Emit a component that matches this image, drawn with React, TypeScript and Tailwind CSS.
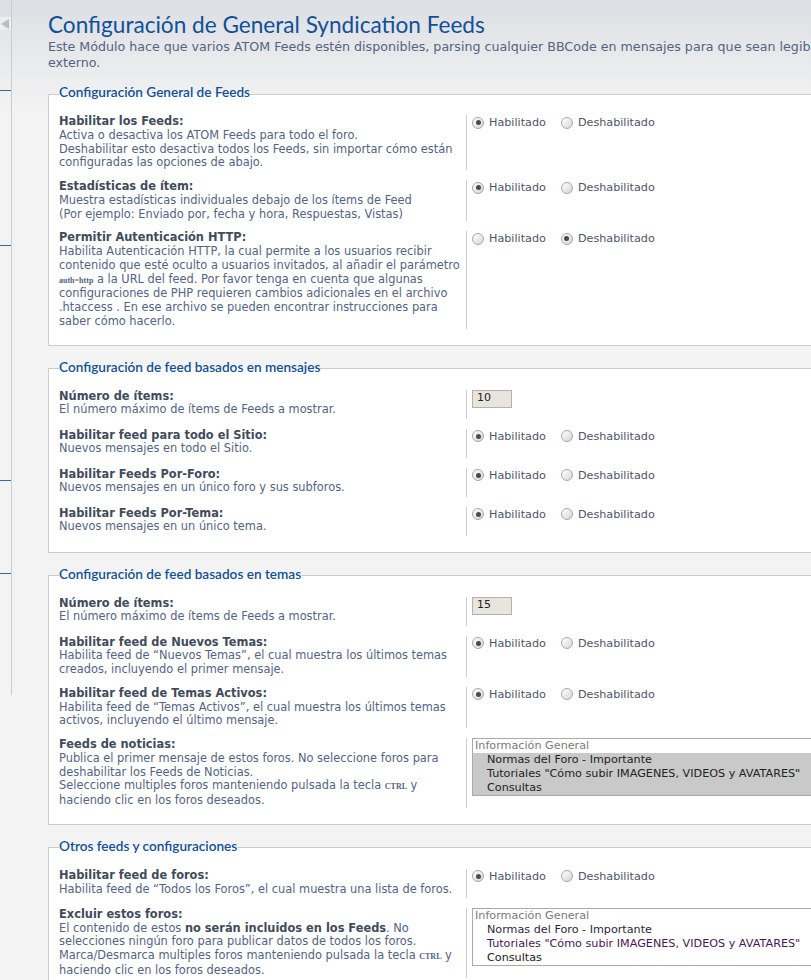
import React from "react";

const body = { fontFamily: '"DejaVu Sans", Verdana, sans-serif' };
const head = { fontFamily: 'Lato, "Trebuchet MS", sans-serif' };

function Radio({ on }: { on: boolean }) {
  return (
    <span className="inline-flex h-[12px] w-[12px] shrink-0 items-center justify-center rounded-full border border-[#a7a7a7] bg-gradient-to-br from-[#ffffff] to-[#d6d6d6]">
      {on ? <span className="h-[5px] w-[5px] rounded-full bg-[#4a4a4a]" /> : null}
    </span>
  );
}

function YesNo({ yes }: { yes: boolean }) {
  return (
    <div className="flex items-center pt-[1px] text-[11.2px] leading-[13px] text-[#4f5468]">
      <Radio on={yes} />
      <span className="ml-[5px]">Habilitado</span>
      <span className="ml-[15px] flex"><Radio on={!yes} /></span>
      <span className="ml-[5px]">Deshabilitado</span>
    </div>
  );
}

function NumInput({ v }: { v: string }) {
  return (
    <div className="flex h-[18px] w-[40px] items-center border border-[#b6b1a8] bg-[#e8e4de] pl-[4px] text-[11px] text-[#222]">
      {v}
    </div>
  );
}

function ForumSelect({ selected }: { selected: boolean }) {
  const opt = selected ? "bg-[#c9c9c9]" : "";
  return (
    <div className="h-[58px] w-[420px] border border-[#a9a9a9] bg-white text-[11.2px] leading-[14px]">
      <div className="pl-[2px] text-[#7a7a7a]">Información General</div>
      <div className={`pl-[14px] ${opt} ${selected ? "text-[#222]" : "text-[#2e1f3a]"}`}>Normas del Foro - Importante</div>
      <div className={`pl-[14px] ${opt} ${selected ? "text-[#222]" : "text-[#4a1656]"}`}>Tutoriales "Cómo subir IMAGENES, VIDEOS y AVATARES"</div>
      <div className={`pl-[14px] ${opt} text-[#222]`}>Consultas</div>
    </div>
  );
}

const Kbd = ({ children }: { children: React.ReactNode }) => (
  <span className="text-[8px] font-bold" style={{ fontFamily: '"Liberation Serif", serif' }}>{children}</span>
);

type Row = { label: string; desc: React.ReactNode[]; ctl: React.ReactNode };

function Field({ r }: { r: Row }) {
  return (
    <div className="mb-[10px] flex">
      <div className="w-[407px] shrink-0 text-[11.4px] leading-[13.75px]">
        <div className="font-bold text-[#414b5c]">{r.label}</div>
        {r.desc.map((d, i) => (
          <div key={i} className="whitespace-nowrap text-[#536482]">{d}</div>
        ))}
      </div>
      <div className="min-h-[29px] flex-1 border-l border-[#cfcfcf] pl-[5px]">{r.ctl}</div>
    </div>
  );
}

function Section({ title, rows }: { title: string; rows: Row[] }) {
  return (
    <fieldset className="mb-[13px] w-[820px] border border-[#cccccc] bg-white px-[10px] pb-[6px] pt-[11px]">
      <legend className="px-0 pb-[4px] text-[13.6px] font-semibold leading-[16px] text-[#115098]" style={head}>
        {title}
      </legend>
      {rows.map((r, i) => (
        <Field key={i} r={r} />
      ))}
    </fieldset>
  );
}

const s1: Row[] = [
  {
    label: "Habilitar los Feeds:",
    desc: [
      "Activa o desactiva los ATOM Feeds para todo el foro.",
      "Deshabilitar esto desactiva todos los Feeds, sin importar cómo están",
      "configuradas las opciones de abajo.",
    ],
    ctl: <YesNo yes />,
  },
  {
    label: "Estadísticas de ítem:",
    desc: [
      "Muestra estadísticas individuales debajo de los ítems de Feed",
      "(Por ejemplo: Enviado por, fecha y hora, Respuestas, Vistas)",
    ],
    ctl: <YesNo yes />,
  },
  {
    label: "Permitir Autenticación HTTP:",
    desc: [
      "Habilita Autenticación HTTP, la cual permite a los usuarios recibir",
      "contenido que esté oculto a usuarios invitados, al añadir el parámetro",
      <>
        <Kbd>auth=http</Kbd> a la URL del feed. Por favor tenga en cuenta que algunas
      </>,
      "configuraciones de PHP requieren cambios adicionales en el archivo",
      ".htaccess . En ese archivo se pueden encontrar instrucciones para",
      "saber cómo hacerlo.",
    ],
    ctl: <YesNo yes={false} />,
  },
];

const s2: Row[] = [
  { label: "Número de ítems:", desc: ["El número máximo de ítems de Feeds a mostrar."], ctl: <NumInput v="10" /> },
  { label: "Habilitar feed para todo el Sitio:", desc: ["Nuevos mensajes en todo el Sitio."], ctl: <YesNo yes /> },
  { label: "Habilitar Feeds Por-Foro:", desc: ["Nuevos mensajes en un único foro y sus subforos."], ctl: <YesNo yes /> },
  { label: "Habilitar Feeds Por-Tema:", desc: ["Nuevos mensajes en un único tema."], ctl: <YesNo yes /> },
];

const s3: Row[] = [
  { label: "Número de ítems:", desc: ["El número máximo de ítems de Feeds a mostrar."], ctl: <NumInput v="15" /> },
  {
    label: "Habilitar feed de Nuevos Temas:",
    desc: ["Habilita feed de “Nuevos Temas”, el cual muestra los últimos temas", "creados, incluyendo el primer mensaje."],
    ctl: <YesNo yes />,
  },
  {
    label: "Habilitar feed de Temas Activos:",
    desc: ["Habilita feed de “Temas Activos”, el cual muestra los últimos temas", "activos, incluyendo el último mensaje."],
    ctl: <YesNo yes />,
  },
  {
    label: "Feeds de noticias:",
    desc: [
      "Publica el primer mensaje de estos foros. No seleccione foros para",
      "deshabilitar los Feeds de Noticias.",
      <>
        Seleccione multiples foros manteniendo pulsada la tecla <Kbd>CTRL</Kbd> y
      </>,
      "haciendo clic en los foros deseados.",
    ],
    ctl: <ForumSelect selected />,
  },
];

const s4: Row[] = [
  {
    label: "Habilitar feed de foros:",
    desc: ["Habilita feed de “Todos los Foros”, el cual muestra una lista de foros."],
    ctl: <YesNo yes />,
  },
  {
    label: "Excluir estos foros:",
    desc: [
      <>
        El contenido de estos <b className="text-[#414b5c]">no serán incluidos en los Feeds</b>. No
      </>,
      "selecciones ningún foro para publicar datos de todos los foros.",
      <>
        Marca/Desmarca multiples foros manteniendo pulsada la tecla <Kbd>CTRL</Kbd> y
      </>,
      "haciendo clic en los foros deseados.",
    ],
    ctl: <ForumSelect selected={false} />,
  },
];

export default function App() {
  return (
    <div
      className="flex h-[980px] w-[811px] overflow-hidden bg-[#f3f3f3] bg-gradient-to-b from-[#dcdfe3] to-[#f3f3f3] bg-[length:100%_110px] bg-no-repeat"
      style={body}
    >
      <div className="h-[695px] w-[12px] shrink-0 border-r border-[#c9cdd3]">
        <div className="mt-[17px] flex h-[13px] w-[11px] items-center justify-center bg-[#eceef0]">
          <svg width="9" height="10" viewBox="0 0 9 10">
            <path d="M8 0 L8 10 L0 5 Z" fill="#b9bcc0" />
          </svg>
        </div>
        <div className="mt-[60px] h-px w-full bg-[#2a6db0]" />
        <div className="mt-[154px] h-px w-full bg-[#2a6db0]" />
        <div className="mt-[234px] h-px w-full bg-[#2a6db0]" />
        <div className="mt-[92px] h-px w-full bg-[#2a6db0]" />
      </div>
      <div className="min-w-0 flex-1 pl-[36px] pt-[11px]">
        <h1 className="text-[22.6px] leading-[28px] text-[#115098]" style={head}>
          Configuración de General Syndication Feeds
        </h1>
        <p className="mb-[13px] whitespace-nowrap text-[12.65px] leading-[16px] text-[#536482]">
          Este Módulo hace que varios ATOM Feeds estén disponibles, parsing cualquier BBCode en mensajes para que sean legibles por un lector
          <br />
          externo.
        </p>
        <Section title="Configuración General de Feeds" rows={s1} />
        <Section title="Configuración de feed basados en mensajes" rows={s2} />
        <Section title="Configuración de feed basados en temas" rows={s3} />
        <Section title="Otros feeds y configuraciones" rows={s4} />
      </div>
    </div>
  );
}
